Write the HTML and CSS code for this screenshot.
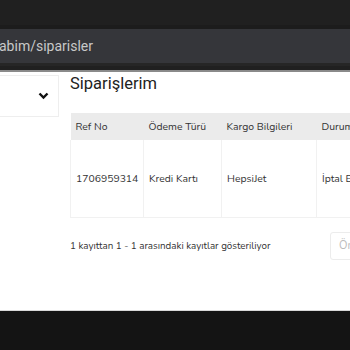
FILE: index.html
```html
<!DOCTYPE html>
<html lang="tr">
<head>
    <meta charset="UTF-8">
    <meta name="viewport" content="width=device-width, initial-scale=1.0">
    <title>Siparişlerim</title>
    <link rel="stylesheet" href="styles.css">
</head>
<body>
    <div class="chrome-top"></div>
    <div class="url-bar">
        <span class="url-text">abim/siparisler</span>
    </div>
    <div class="chrome-gap"></div>
    <div class="page">
        <div class="sidebar">
            <div class="side-card">
                <svg class="chevron" width="11" height="8" viewBox="0 0 11 8">
                    <path d="M1.5 1.5 L5.5 5.5 L9.5 1.5" fill="none" stroke="#111" stroke-width="2.4"/>
                </svg>
            </div>
        </div>
        <div class="main">
            <h1 class="title">Siparişlerim</h1>
            <table class="orders">
                <thead>
                    <tr>
                        <th class="c1">Ref No</th>
                        <th class="c2">Ödeme Türü</th>
                        <th class="c3">Kargo Bilgileri</th>
                        <th class="c4">Durum</th>
                    </tr>
                </thead>
                <tbody>
                    <tr>
                        <td>1706959314</td>
                        <td>Kredi Kartı</td>
                        <td>HepsiJet</td>
                        <td>İptal Edildi</td>
                    </tr>
                </tbody>
            </table>
            <div class="table-foot">
                <span class="info">1 kayıttan 1 - 1 arasındaki kayıtlar gösteriliyor</span>
                <button class="btn-page">Önceki</button>
            </div>
        </div>
    </div>
    <div class="chrome-bottom"></div>
</body>
</html>
```

FILE: styles.css
```css
body {
    margin: 0;
    padding: 0;
    width: 350px;
    height: 350px;
    overflow: hidden;
    font-family: "Nunito", Lato, "Open Sans", sans-serif;
    background: #141414;
}
* {box-sizing: border-box;}
.chrome-top {
    height: 29px;
    background: #202020;
    border-bottom: 4px solid #1c1c1c;
}
.url-bar {
    height: 34px;
    background: #35363a;
    display: flex;
    align-items: center;
    white-space: nowrap;
    overflow: hidden;
}
.url-text {
    font-family: Roboto, sans-serif;
    font-size: 14px;
    color: #c8c8c8;
    margin-left: -1px;
    padding-bottom: 1px;
}
.chrome-gap {
    height: 9px;
    background: #202020;
    border-top: 3px solid #262626;
    border-bottom: 2px solid #8a8a8a;
}
.page {
    height: 239px;
    background: #fff;
    display: flex;
    border-bottom: 1px solid #d8d8d8;
    overflow: hidden;
}
.sidebar {
    width: 70px;
    flex: none;
    padding-top: 3px;
}
.side-card {
    width: 59px;
    height: 42px;
    border: 1px solid #eeeeee;
    border-left: none;
    display: flex;
    align-items: center;
    justify-content: flex-end;
    padding-right: 9px;
}
.main {
    flex: 1;
    min-width: 0;
    white-space: nowrap;
}
.title {
    font-family: Roboto, sans-serif;
    font-weight: 400;
    font-size: 16.5px;
    color: #222;
    margin: 1px 0 0;
    height: 40px;
    line-height: 22px;
}
.orders {
    border-collapse: collapse;
    font-size: 10.4px;
    color: #333;
    table-layout: fixed;
    width: 320px;
}
.orders th {
    background: #ebebeb;
    font-weight: 400;
    text-align: left;
    height: 27px;
    padding: 0 5px;
}
.orders td {
    height: 77px;
    padding: 0 5px;
    border: 1px solid #f1f1f1;
    border-top: none;
    overflow: hidden;
}
.orders .c1 { width: 73px; }
.orders .c2 { width: 78px; }
.orders .c3 { width: 95px; }
.orders .c4 { width: 74px; }
.table-foot {
    display: flex;
    align-items: center;
    justify-content: space-between;
    margin-top: 14px;
    font-size: 9.8px;
    color: #333;
}
.btn-page {
    font-family: inherit;
    font-size: 11px;
    color: #bbb;
    background: #fff;
    border: 1px solid #ececec;
    border-radius: 3px;
    height: 28px;
    width: 60px;
    margin-right: -40px;
    text-align: left;
    padding-left: 8px;
}
.chrome-bottom {
    height: 38px;
    background: #141414;
}
```
